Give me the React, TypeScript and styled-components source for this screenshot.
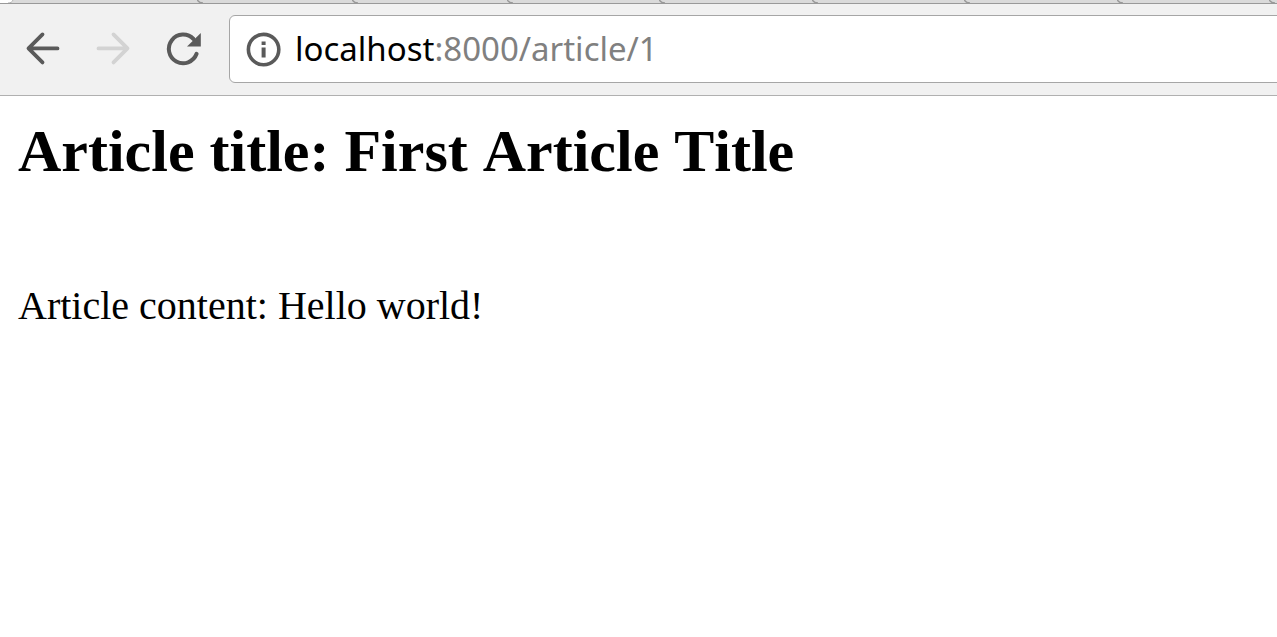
import React from "react";
import styled, { createGlobalStyle } from "styled-components";

const GlobalStyle = createGlobalStyle`
  *, *::before, *::after { box-sizing: border-box; }
  body { margin: 0; background: #fff; overflow-x: hidden; }
`;

const TabStrip = styled.div`
  display: flex;
  height: 4px;
  padding-left: 8px;
  overflow: hidden;
  border-bottom: 1px solid #999;
`;

const TabEdge = styled.svg`
  display: block;
  width: 6px;
  height: 3px;
`;

const Tab = styled.div<{ $width: number }>`
  flex: none;
  display: flex;
  justify-content: flex-end;
  width: ${(p) => p.$width}px;
  height: 3px;
  background: #dadada;
`;

const FirstEdge = styled(TabEdge)`
  flex: none;
`;

const Toolbar = styled.header`
  display: flex;
  align-items: flex-start;
  height: 92px;
  padding: 11px 0 0 8px;
  background: #f1f1f1;
  border-bottom: 1px solid #b0b0b0;
`;

const NavButton = styled.button`
  flex: none;
  width: 70px;
  height: 68px;
  padding: 0;
  border: 0;
  background: none;
  color: #5a5a5a;

  &:disabled { color: #d3d3d3; }
`;

const Icon = styled.svg`
  display: block;
  width: 70px;
  height: 68px;
`;

const AddressBar = styled.form`
  flex: 1;
  display: flex;
  align-items: center;
  height: 68px;
  margin: 0 -8px 0 11px;
  padding-left: 16px;
  background: #fff;
  border: 1px solid #a6a6a6;
  border-radius: 6px;
  font: 33px/48px "Noto Sans", "Open Sans", sans-serif;
`;

const InfoButton = styled.button`
  flex: none;
  width: 36px;
  height: 36px;
  margin-right: 13px;
  padding: 0;
  border: 0;
  background: none;
  color: #5a5a5a;
`;

const InfoIcon = styled.svg`
  display: block;
  width: 36px;
  height: 36px;
`;

const Host = styled.label`
  color: #000;
`;

const PathInput = styled.input`
  flex: 1;
  min-width: 0;
  padding: 0;
  border: 0;
  outline: 0;
  background: none;
  color: #808080;
  font: inherit;
`;

const Article = styled.main`
  padding: 21px 18px;
  color: #000;
  font: 40px/46px "Liberation Serif", "Times New Roman", serif;
  font-kerning: none;
`;

const Title = styled.h2`
  margin: 0 0 97px;
  font-size: 60px;
  line-height: 69px;
`;

const Content = styled.p`
  margin: 0;
`;

const tabWidths = [189, 155, 155, 152, 153, 152, 153, 152, 152];

export default function App() {
  return (
    <>
      <GlobalStyle />
      <TabStrip>
        <FirstEdge viewBox="0 0 6 3">
          <path d="M0 3C3 3 4 2 5 0H6V3Z" fill="#dadada" />
          <path d="M0 3C3 3 4 2 5 0" fill="none" stroke="#b4b4b4" />
        </FirstEdge>
        {tabWidths.map((width, i) => (
          <Tab key={i} $width={width}>
            <TabEdge viewBox="0 0 6 3">
              <path d="M0 -1C1 2 3 3 6 3" fill="none" stroke="#999" strokeWidth="1.4" />
            </TabEdge>
          </Tab>
        ))}
      </TabStrip>
      <Toolbar>
        <NavButton type="button" aria-label="Back">
          <Icon viewBox="0 0 70 68" fill="none" stroke="currentColor" strokeWidth="3.8" strokeLinecap="round" strokeLinejoin="round">
            <path d="M49.5 33.4H21M34.5 19.4L20.5 33.4L34.5 47.4" />
          </Icon>
        </NavButton>
        <NavButton type="button" aria-label="Forward" disabled>
          <Icon viewBox="0 0 70 68" fill="none" stroke="currentColor" strokeWidth="3.8" strokeLinecap="round" strokeLinejoin="round">
            <path d="M20.5 33.4H49M35.5 19.4L49.5 33.4L35.5 47.4" />
          </Icon>
        </NavButton>
        <NavButton type="button" aria-label="Reload">
          <Icon viewBox="0 0 70 68" fill="none" stroke="currentColor" strokeWidth="4" strokeLinecap="round">
            <path d="M48.6 38.8A14.3 14.3 0 1 1 45.5 24" />
            <path d="M52.8 18V31.5H39Z" fill="currentColor" stroke="none" />
          </Icon>
        </NavButton>
        <AddressBar onSubmit={(e) => e.preventDefault()}>
          <InfoButton type="button" aria-label="View site information">
            <InfoIcon viewBox="0 0 36 36">
              <circle cx="17.6" cy="18.6" r="15.2" fill="none" stroke="currentColor" strokeWidth="3.6" />
              <path d="M15.6 10.6H19.6V14H15.6ZM15.6 16.4H19.6V26.6H15.6Z" fill="currentColor" />
            </InfoIcon>
          </InfoButton>
          <Host htmlFor="address">localhost</Host>
          <PathInput id="address" type="text" defaultValue=":8000/article/1" spellCheck={false} />
        </AddressBar>
      </Toolbar>
      <Article>
        <Title>Article title: First Article Title</Title>
        <Content>Article content: Hello world!</Content>
      </Article>
    </>
  );
}
